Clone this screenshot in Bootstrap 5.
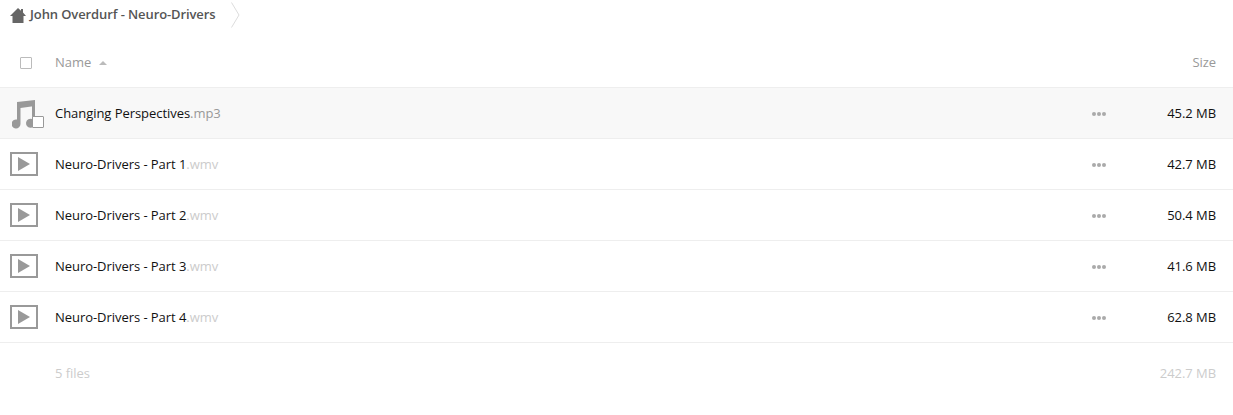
<!DOCTYPE html>
<html lang="en">
<head>
  <meta charset="UTF-8">
  <title>John Overdurf - Neuro-Drivers</title>
  <link href="https://cdn.jsdelivr.net/npm/bootstrap@5.3.0/dist/css/bootstrap.min.css" rel="stylesheet">
  <style>
    body {
      font-family: "Open Sans", sans-serif;
      font-size: 13px;
      color: #111;
      background: #fff;
    }
    .crumb-bar {
      height: 37px;
      padding: 0 0 7px 10px;
      color: #555;
      font-weight: 600;
      letter-spacing: -0.1px;
    }
    .crumb-home { margin-right: 4px; }
    .crumb-sep { margin-left: 15px; margin-top: -1px; }
    .file-table { width: 100%; border-collapse: separate; border-spacing: 0; letter-spacing: -0.05px; }
    .file-table th, .file-table td { padding: 0; vertical-align: middle; }
    .file-table th { height: 51px; padding-top: 2px; font-weight: 400; color: #999; border-bottom: 1px solid #eee; }
    .file-table tbody td { height: 51px; padding-top: 2px; border-bottom: 1px solid #eee; }
    .file-table tfoot td { height: 61px; color: #ccc; }
    .file-table tbody tr.row-hover td { background: #f8f8f8; }
    .col-icon { width: 55px; }
    .col-more { width: 29px; }
    .col-size { width: 112px; padding-right: 17px !important; text-align: right; }
    .icon-cell { position: relative; display: block; height: 30px; }
    .check-box {
      display: block;
      width: 12px;
      height: 12px;
      margin-left: 20px;
      border: 1px solid #bbb;
      border-radius: 1px;
      background: #fff;
    }
    .check-over {
      position: absolute;
      left: 32px;
      top: 17px;
      margin: 0;
      border-color: #999;
    }
    .row-hover .file-ext { color: #999; }
    .file-ext-light { color: #ccc; }
    .sort-up {
      display: inline-block;
      margin-left: 5px;
      vertical-align: 2px;
      border: 4px solid transparent;
      border-top: 0;
      border-bottom: 4px solid #bbb;
    }
    .more-dots { display: flex; gap: 1px; }
    .more-dots span { width: 4px; height: 4px; border-radius: 50%; background: #aaa; }
  </style>
</head>
<body>
  <div class="crumb-bar d-flex align-items-center">
    <svg class="crumb-home" width="16" height="15" viewBox="0 0 16 15">
      <path fill="#666" d="M8 0 L11 2.8 V1 H13 V4.6 L16 8 H13.5 V15 H2.5 V8 H0 Z"/>
    </svg>
    <span>John Overdurf - Neuro-Drivers</span>
    <svg class="crumb-sep" width="9" height="26" viewBox="0 0 9 26">
      <path fill="none" stroke="#ddd" d="M0.5 0.5 L8 13 L0.5 25.5"/>
    </svg>
  </div>

  <table class="file-table">
    <thead>
      <tr>
        <th class="col-icon"><span class="check-box"></span></th>
        <th>Name <span class="sort-up"></span></th>
        <th class="col-more"></th>
        <th class="col-size">Size</th>
      </tr>
    </thead>
    <tbody id="fileRows"></tbody>
    <tfoot>
      <tr>
        <td></td>
        <td>5 files</td>
        <td></td>
        <td class="col-size">242.7 MB</td>
      </tr>
    </tfoot>
  </table>

  <script src="https://cdn.jsdelivr.net/npm/bootstrap@5.3.0/dist/js/bootstrap.bundle.min.js"></script>
  <script>
    const files = [
      { name: 'Changing Perspectives', ext: '.mp3', size: '45.2 MB', audio: true },
      { name: 'Neuro-Drivers - Part 1', ext: '.wmv', size: '42.7 MB' },
      { name: 'Neuro-Drivers - Part 2', ext: '.wmv', size: '50.4 MB' },
      { name: 'Neuro-Drivers - Part 3', ext: '.wmv', size: '41.6 MB' },
      { name: 'Neuro-Drivers - Part 4', ext: '.wmv', size: '62.8 MB' }
    ];

    const musicIcon = `
      <svg width="24" height="30" viewBox="0 0 24 30" class="d-block" style="margin-left:12px">
        <path fill="#999" d="M5 3 L23 1 V7 L8.5 9 V25 A4.5 4.5 0 1 1 5 20.6 Z"/>
        <path fill="#999" d="M20 2 H23 V24 A4.5 4.5 0 1 1 20 20 Z"/>
      </svg>
      <span class="check-box check-over"></span>`;

    const videoIcon = `
      <svg width="28" height="24" viewBox="0 0 28 24" class="d-block" style="margin:3px 0 0 10px">
        <rect x="1" y="1" width="26" height="22" fill="#fff" stroke="#999" stroke-width="2"/>
        <path fill="#999" d="M8 5 L20 12 L8 19 Z"/>
      </svg>`;

    // Fill the rows from the list
    document.getElementById('fileRows').innerHTML = files.map(f => `
      <tr class="${f.audio ? 'row-hover' : ''}">
        <td class="col-icon"><span class="icon-cell">${f.audio ? musicIcon : videoIcon}</span></td>
        <td>${f.name}<span class="${f.audio ? 'file-ext' : 'file-ext-light'}">${f.ext}</span></td>
        <td class="col-more"><div class="more-dots"><span></span><span></span><span></span></div></td>
        <td class="col-size">${f.size}</td>
      </tr>`).join('');
  </script>
</body>
</html>
